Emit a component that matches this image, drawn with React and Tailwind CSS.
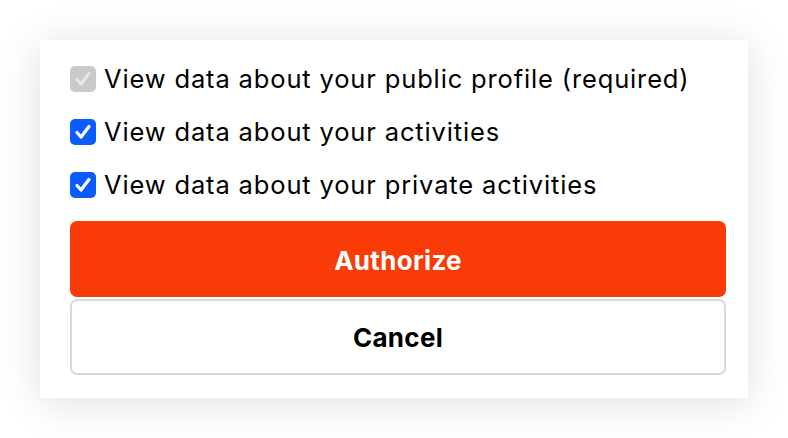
import React, { useState } from 'react';

const Check = ({ checked, disabled, onChange }) => (
  <button
    type="button"
    onClick={disabled ? undefined : onChange}
    className={`w-[26px] h-[26px] rounded-[5px] flex items-center justify-center shrink-0 ${
      disabled ? 'bg-[#c9c9c9]' : checked ? 'bg-[#0b5cff]' : 'bg-white border-2 border-gray-400'
    }`}
  >
    {checked && (
      <svg width="20" height="20" viewBox="0 0 20 20" fill="none">
        <path
          d="M4 10.5l4 4.5L16 4.5"
          stroke={disabled ? '#e6e6e6' : '#ffffff'}
          strokeWidth="3.2"
          strokeLinecap="round"
          strokeLinejoin="round"
        />
      </svg>
    )}
  </button>
);

const App = () => {
  const [scopes, setScopes] = useState({ activities: true, privateActivities: true });

  const rows = [
    { key: 'profile', label: 'View data about your public profile (required)', disabled: true },
    { key: 'activities', label: 'View data about your activities' },
    { key: 'privateActivities', label: 'View data about your private activities' },
  ];

  return (
    <div className="w-[788px] h-[438px] bg-white pt-[40px] pl-[40px] font-['Inter',sans-serif]">
      <div className="w-[708px] h-[358px] bg-white shadow-[0_4px_40px_rgba(0,0,0,0.13)] px-[30px] pt-[12px]">
        <div className="flex flex-col">
          {rows.map((row) => (
            <div key={row.key} className="h-[53px] flex items-center gap-[8px]">
              <Check
                checked={row.disabled ? true : scopes[row.key]}
                disabled={row.disabled}
                onChange={() => setScopes({ ...scopes, [row.key]: !scopes[row.key] })}
              />
              <span className="text-[25.5px] text-black tracking-[0.85px] pt-[1px]">{row.label}</span>
            </div>
          ))}
        </div>
        <div className="w-[656px] mt-[10px] flex flex-col gap-[2px]">
          <button className="h-[76px] rounded-[7px] bg-[#f83b07] text-white text-[26px] tracking-[0.3px] font-bold pt-[3px]">
            Authorize
          </button>
          <button className="h-[76px] rounded-[7px] bg-white border-2 border-[#d8d8e2] text-black text-[26px] tracking-[0.3px] font-bold pt-[1px]">
            Cancel
          </button>
        </div>
      </div>
    </div>
  );
};

export default App;
